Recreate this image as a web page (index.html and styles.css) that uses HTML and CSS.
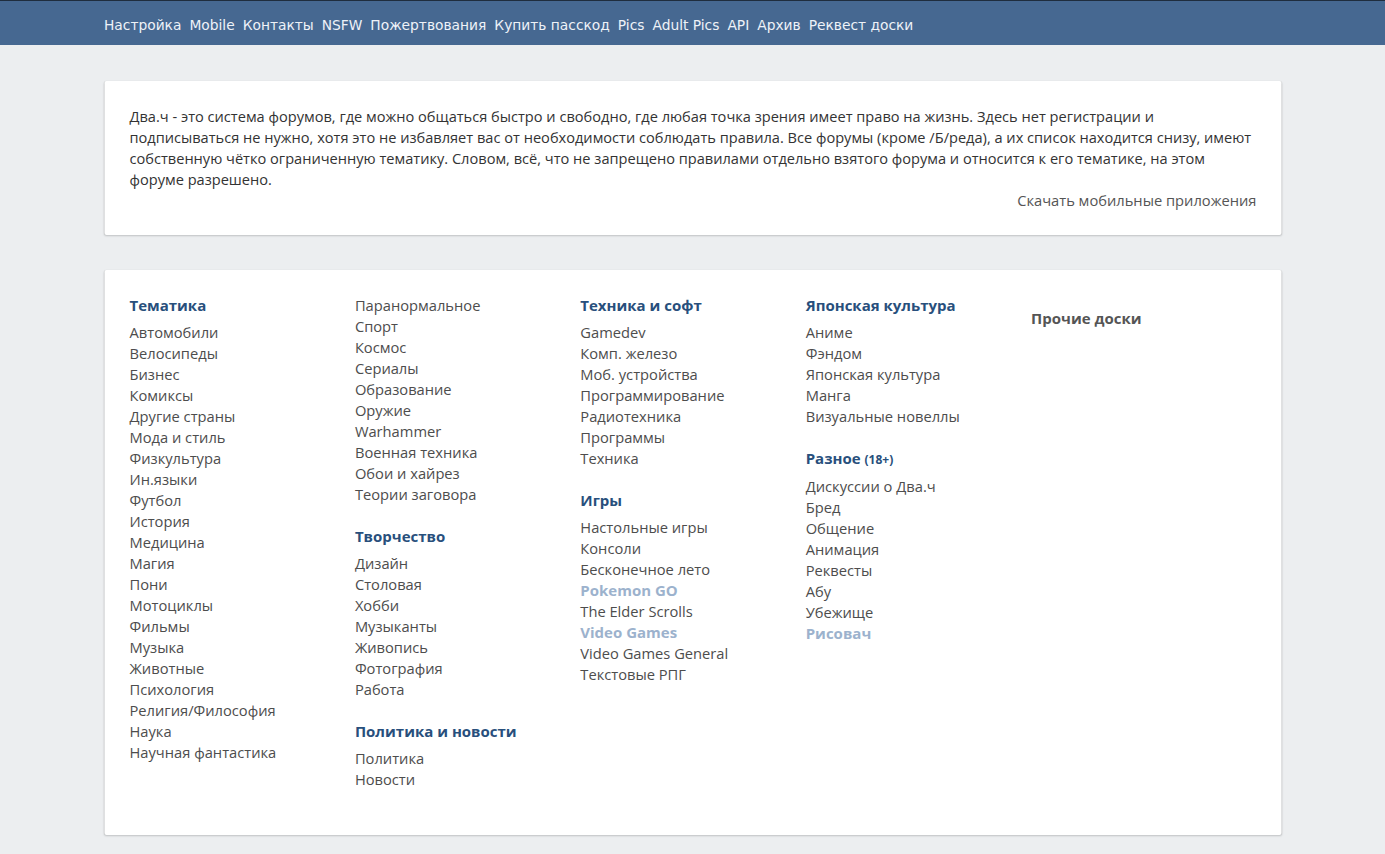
FILE: index.html
```html
<!DOCTYPE html>
<html lang="ru">
<head>
<meta charset="utf-8">
<title>Два.ч</title>
<link rel="stylesheet" href="styles.css">
</head>
<body>
<header class="topbar">
  <nav class="topnav">
    <a href="#">Настройка</a>
    <a href="#">Mobile</a>
    <a href="#">Контакты</a>
    <a href="#">NSFW</a>
    <a href="#">Пожертвования</a>
    <a href="#">Купить пасскод</a>
    <a href="#">Pics</a>
    <a href="#">Adult Pics</a>
    <a href="#">API</a>
    <a href="#">Архив</a>
    <a href="#">Реквест доски</a>
  </nav>
</header>
<main class="wrap">
  <section class="card intro">
    <p class="intro-text">Два.ч - это система форумов, где можно общаться быстро и свободно, где любая точка зрения имеет право на жизнь. Здесь нет регистрации и<br>подписываться не нужно, хотя это не избавляет вас от необходимости соблюдать правила. Все форумы (кроме /Б/реда), а их список находится снизу, имеют<br>собственную чётко ограниченную тематику. Словом, всё, что не запрещено правилами отдельно взятого форума и относится к его тематике, на этом<br>форуме разрешено.</p>
    <div class="apps"><a href="#">Скачать мобильные приложения</a></div>
  </section>
  <section class="card boards">
    <div class="col">
      <div class="group">
        <h3 class="gh">Тематика</h3>
        <ul class="list">
          <li><a href="#">Автомобили</a></li>
          <li><a href="#">Велосипеды</a></li>
          <li><a href="#">Бизнес</a></li>
          <li><a href="#">Комиксы</a></li>
          <li><a href="#">Другие страны</a></li>
          <li><a href="#">Мода и стиль</a></li>
          <li><a href="#">Физкультура</a></li>
          <li><a href="#">Ин.языки</a></li>
          <li><a href="#">Футбол</a></li>
          <li><a href="#">История</a></li>
          <li><a href="#">Медицина</a></li>
          <li><a href="#">Магия</a></li>
          <li><a href="#">Пони</a></li>
          <li><a href="#">Мотоциклы</a></li>
          <li><a href="#">Фильмы</a></li>
          <li><a href="#">Музыка</a></li>
          <li><a href="#">Животные</a></li>
          <li><a href="#">Психология</a></li>
          <li><a href="#">Религия/Философия</a></li>
          <li><a href="#">Наука</a></li>
          <li><a href="#">Научная фантастика</a></li>
        </ul>
      </div>
    </div>
    <div class="col">
      <div class="group">
        <ul class="list">
          <li><a href="#">Паранормальное</a></li>
          <li><a href="#">Спорт</a></li>
          <li><a href="#">Космос</a></li>
          <li><a href="#">Сериалы</a></li>
          <li><a href="#">Образование</a></li>
          <li><a href="#">Оружие</a></li>
          <li><a href="#">Warhammer</a></li>
          <li><a href="#">Военная техника</a></li>
          <li><a href="#">Обои и хайрез</a></li>
          <li><a href="#">Теории заговора</a></li>
        </ul>
      </div>
      <div class="group">
        <h3 class="gh">Творчество</h3>
        <ul class="list">
          <li><a href="#">Дизайн</a></li>
          <li><a href="#">Столовая</a></li>
          <li><a href="#">Хобби</a></li>
          <li><a href="#">Музыканты</a></li>
          <li><a href="#">Живопись</a></li>
          <li><a href="#">Фотография</a></li>
          <li><a href="#">Работа</a></li>
        </ul>
      </div>
      <div class="group">
        <h3 class="gh">Политика и новости</h3>
        <ul class="list">
          <li><a href="#">Политика</a></li>
          <li><a href="#">Новости</a></li>
        </ul>
      </div>
    </div>
    <div class="col">
      <div class="group">
        <h3 class="gh">Техника и софт</h3>
        <ul class="list">
          <li><a href="#">Gamedev</a></li>
          <li><a href="#">Комп. железо</a></li>
          <li><a href="#">Моб. устройства</a></li>
          <li><a href="#">Программирование</a></li>
          <li><a href="#">Радиотехника</a></li>
          <li><a href="#">Программы</a></li>
          <li><a href="#">Техника</a></li>
        </ul>
      </div>
      <div class="group">
        <h3 class="gh">Игры</h3>
        <ul class="list">
          <li><a href="#">Настольные игры</a></li>
          <li><a href="#">Консоли</a></li>
          <li><a href="#">Бесконечное лето</a></li>
          <li class="sub"><a href="#">Pokemon GO</a></li>
          <li><a href="#">The Elder Scrolls</a></li>
          <li class="sub"><a href="#">Video Games</a></li>
          <li><a href="#">Video Games General</a></li>
          <li><a href="#">Текстовые РПГ</a></li>
        </ul>
      </div>
    </div>
    <div class="col">
      <div class="group">
        <h3 class="gh">Японская культура</h3>
        <ul class="list">
          <li><a href="#">Аниме</a></li>
          <li><a href="#">Фэндом</a></li>
          <li><a href="#">Японская культура</a></li>
          <li><a href="#">Манга</a></li>
          <li><a href="#">Визуальные новеллы</a></li>
        </ul>
      </div>
      <div class="group">
        <h3 class="gh">Разное <span class="age">(18+)</span></h3>
        <ul class="list">
          <li><a href="#">Дискуссии о Два.ч</a></li>
          <li><a href="#">Бред</a></li>
          <li><a href="#">Общение</a></li>
          <li><a href="#">Анимация</a></li>
          <li><a href="#">Реквесты</a></li>
          <li><a href="#">Абу</a></li>
          <li><a href="#">Убежище</a></li>
          <li class="sub"><a href="#">Рисовач</a></li>
        </ul>
      </div>
    </div>
    <div class="col">
      <h3 class="other">Прочие доски</h3>
    </div>
  </section>
</main>
</body>
</html>
```

FILE: styles.css
```css
* { box-sizing: border-box; }
html, body { margin: 0; padding: 0; }
body {
  background: #eceef0;
  font-family: "Open Sans", "Noto Sans", sans-serif;
  font-size: 14.7px;
  color: #333;
}
a { text-decoration: none; color: inherit; }

.topbar {
  background: #466891;
  border-top: 1px solid #1f2d3e;
  height: 45px;
}
.topnav {
  display: flex;
  gap: 8px;
  padding-left: 104px;
  height: 44px;
  align-items: center;
  padding-top: 3px;
  font-family: "DejaVu Sans", Verdana, sans-serif;
  font-size: 13.8px;
}
.topnav a { color: #eef2f8; }

.wrap {
  width: 1177px;
  margin: 0 auto;
  padding: 36px 0 18px;
  display: flex;
  flex-direction: column;
  gap: 35px;
  transform: translateX(0.5px);
}
.card {
  background: #fff;
  border-radius: 2px;
  box-shadow: 0 1px 2px rgba(0, 0, 0, 0.18), 0 0 1px rgba(0, 0, 0, 0.08);
}
.intro { padding: 25px 25px 25px; }
.intro-text {
  margin: 0 -20px 0 0;
  line-height: 21px;
  color: #333;
  font-size: 14.6px;
}
.apps { text-align: right; line-height: 20px; color: #555; margin-top: 0; }

.boards {
  display: grid;
  grid-template-columns: repeat(5, 1fr);
  padding: 25px 25px 45px;
}
.group + .group { margin-top: 21px; }
.gh {
  margin: 0 0 6px;
  font-size: 15px;
  font-weight: 700;
  line-height: 21px;
  color: #284f7c;
}
.age { font-size: 12px; }
.list { list-style: none; margin: 0; padding: 0; }
.list li { line-height: 21px; color: #4d4d4d; }
.list li.sub { font-weight: 700; font-size: 15px; color: #9cb2cd; }
.other {
  margin: 13px 0 0;
  font-size: 15px;
  font-weight: 700;
  line-height: 21px;
  color: #555;
}
```
